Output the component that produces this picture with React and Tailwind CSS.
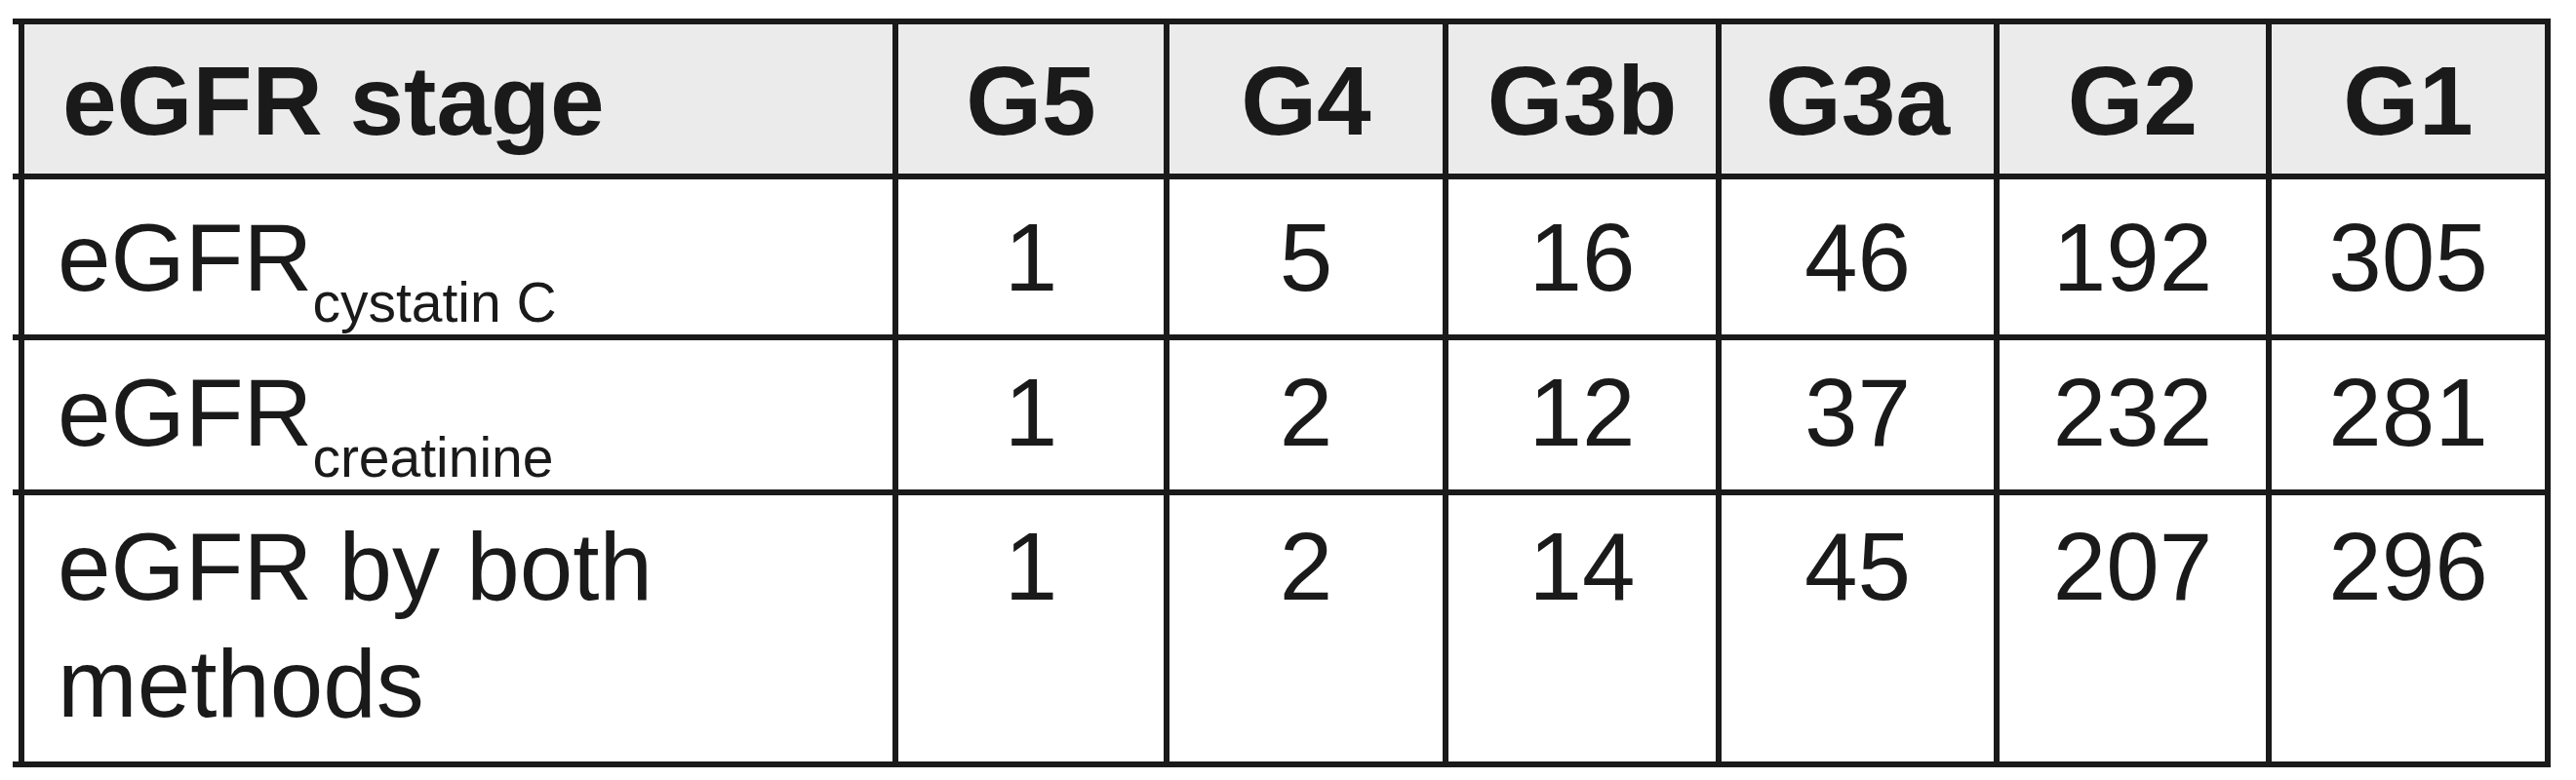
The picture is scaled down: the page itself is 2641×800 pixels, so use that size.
import React from "react";

const font = { fontFamily: '"Liberation Sans", Arial, Helvetica, sans-serif' };

const headers = ["G5", "G4", "G3b", "G3a", "G2", "G1"];
const widths = ["w-[278px]", "w-[286px]", "w-[280px]", "w-[285px]", "w-[279px]", "w-[292px] border-r-[6px]"];

const rows = [
  { label: ["eGFR", "cystatin C"], vals: ["1", "5", "16", "46", "192", "305"], h: "h-[159px]", pt: "pt-[20px]" },
  { label: ["eGFR", "creatinine"], vals: ["1", "2", "12", "37", "232", "281"], h: "h-[153px]", pt: "pt-[14px]" },
  { label: null, vals: ["1", "2", "14", "45", "207", "296"], h: "h-[273px]", pt: "pt-[13px]" },
];

function Rule() {
  return <div className="h-[6px] w-[2602px] bg-[#1a1a1a]" />;
}

export default function App() {
  return (
    <div className="w-[2641px] h-[800px] bg-white pl-[13px] pt-[19px] text-[#1a1a1a]" style={font}>
      <div className="flex flex-col w-[2602px]">
        <Rule />
        <div className="flex ml-[6px] h-[153px] bg-[#ebebeb]">
          <div className="w-[896px] border-l-[6px] border-[#1a1a1a] pl-[39px] pt-[18px] text-[100px] font-bold leading-[120px] whitespace-nowrap">
            eGFR stage
          </div>
          {headers.map((h, i) => (
            <div
              key={h}
              className={`${widths[i]} border-l-[6px] border-[#1a1a1a] pt-[18px] text-center text-[100px] font-bold leading-[120px]`}
            >
              {h}
            </div>
          ))}
        </div>
        {rows.map((r, ri) => (
          <React.Fragment key={ri}>
            <Rule />
            <div className={`flex ml-[6px] ${r.h} bg-white`}>
              <div className={`w-[896px] border-l-[6px] border-[#1a1a1a] pl-[34px] ${r.pt} text-[98px] leading-[120px]`}>
                {r.label ? (
                  <span className="whitespace-nowrap">
                    {r.label[0]}
                    <span className="relative top-[32px] text-[57px] leading-none">{r.label[1]}</span>
                  </span>
                ) : (
                  <>
                    eGFR by both
                    <br />
                    methods
                  </>
                )}
              </div>
              {r.vals.map((v, i) => (
                <div
                  key={i}
                  className={`${widths[i]} border-l-[6px] border-[#1a1a1a] ${r.pt} text-center text-[98px] leading-[120px]`}
                >
                  {v}
                </div>
              ))}
            </div>
          </React.Fragment>
        ))}
        <Rule />
      </div>
    </div>
  );
}
